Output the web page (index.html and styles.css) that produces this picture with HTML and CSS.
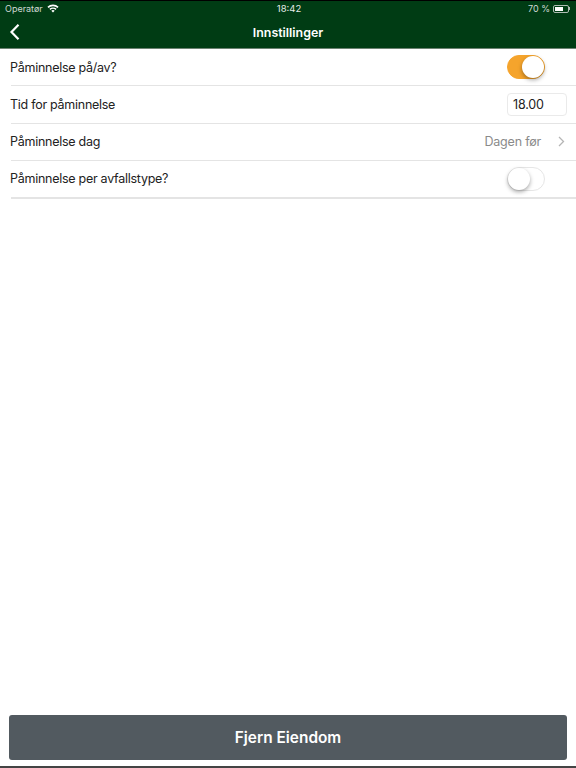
FILE: index.html
```html
<!DOCTYPE html>
<html lang="no">

<head>
  <meta charset="UTF-8">
  <meta name="viewport" content="width=device-width, initial-scale=1.0">
  <title>Innstillinger</title>
  <link rel="stylesheet" href="styles.css">
</head>

<body>
  <header class="top">
    <div class="status">
      <div class="status-left">
        <span>Operatør</span>
        <svg class="wifi" width="12" height="9" viewBox="0 0 12 9">
          <path d="M6 8.6 4.3 6.8a2.5 2.5 0 0 1 3.4 0z" fill="#fff" />
          <path d="M3.4 5.9 2.4 4.8a5.3 5.3 0 0 1 7.2 0l-1 1.1a3.9 3.9 0 0 0-5.2 0z" fill="#fff" />
          <path d="M1.5 3.9.4 2.8a8.2 8.2 0 0 1 11.2 0l-1.1 1.1a6.7 6.7 0 0 0-9 0z" fill="#fff" />
        </svg>
      </div>
      <span class="clock">18:42</span>
      <div class="status-right">
        <span>70 %</span>
        <span class="battery"><span class="battery-level"></span></span>
        <span class="battery-tip"></span>
      </div>
    </div>
    <nav class="nav">
      <svg class="back" width="12" height="16" viewBox="0 0 12 16">
        <path d="M9.5.8 2.5 8l7 7.2" fill="none" stroke="#fff" stroke-width="2.2" />
      </svg>
      <h1 class="title">Innstillinger</h1>
    </nav>
  </header>

  <main class="list">
    <div class="row">
      <span class="label">Påminnelse på/av?</span>
      <span class="switch on"><span class="knob"></span></span>
    </div>
    <div class="row">
      <span class="label">Tid for påminnelse</span>
      <span class="time">18.00</span>
    </div>
    <div class="row">
      <span class="label">Påminnelse dag</span>
      <div class="value">
        <span>Dagen før</span>
        <svg width="7" height="11" viewBox="0 0 7 11">
          <path d="M1 1l4.5 4.5L1 10" fill="none" stroke="#b5b5b5" stroke-width="1.3" />
        </svg>
      </div>
    </div>
    <div class="row last">
      <span class="label">Påminnelse per avfallstype?</span>
      <span class="switch"><span class="knob"></span></span>
    </div>
  </main>

  <footer class="bottom">
    <button class="remove">Fjern Eiendom</button>
  </footer>
</body>

</html>
```

FILE: styles.css
```css
* {
  box-sizing: border-box;
}

html {
  background-color: #fff;
}

body {
  font-family: Inter, 'Liberation Sans', sans-serif;
  color: #222;
  margin: 0;
  display: flex;
  flex-direction: column;
  height: 768px;
  overflow: hidden;
}

.top {
  background-color: #003c14;
  border-top: 1px solid #000;
  border-bottom: 1px solid #6c8272;
  color: #fff;
  height: 49px;
}

.status {
  display: grid;
  grid-template-columns: 1fr auto 1fr;
  align-items: center;
  height: 15px;
  padding: 0 5px;
  font-size: 9px;
  color: #cfd8d2;
}

.status-left {
  display: flex;
  align-items: center;
  gap: 4px;
}

.clock {
  color: #e6ebe7;
  font-size: 9.5px;
  padding-left: 2px;
}

.status-right {
  display: flex;
  align-items: center;
  justify-content: flex-end;
  gap: 3px;
  padding-right: 1px;
}

.battery {
  width: 16px;
  height: 8px;
  border: 1px solid #aebcb3;
  border-radius: 2px;
  padding: 1px;
  display: block;
}

.battery-level {
  display: block;
  width: 70%;
  height: 100%;
  background-color: #fff;
}

.battery-tip {
  width: 1px;
  height: 3px;
  margin-left: -3px;
  background-color: #aebcb3;
}

.nav {
  position: relative;
  display: flex;
  justify-content: center;
  align-items: center;
  height: 32px;
}

.back {
  position: absolute;
  left: 9px;
  top: 8px;
}

.title {
  margin: 0;
  font-size: 12.4px;
  font-weight: 600;
}

.list {
  flex: 1;
}

.row {
  display: flex;
  justify-content: space-between;
  align-items: center;
  height: 37.3px;
  margin-left: 11px;
  padding-right: 9px;
  border-bottom: 1px solid #e4e4e4;
}

.row.last {
  height: 38px;
  border-bottom: 2px solid #e4e4e4;
}

.label {
  margin-left: -1px;
  font-size: 12.5px;
  letter-spacing: -0.27px;
}

.switch {
  display: block;
  position: relative;
  width: 38px;
  height: 24px;
  margin-right: 22px;
  border: 1px solid #e6e6e6;
  border-radius: 12px;
  background-color: #fff;
}

.switch.on {
  background-color: #f5a42c;
  border-color: #f5a42c;
}

.knob {
  position: absolute;
  left: 0;
  top: 0;
  width: 22px;
  height: 22px;
  border-radius: 50%;
  background-color: #fff;
  box-shadow: 0 2px 4px rgba(0, 0, 0, 0.35);
}

.switch.on .knob {
  left: 14px;
}

.time {
  width: 60px;
  height: 23px;
  padding-left: 5px;
  border: 1px solid #eaeaea;
  border-radius: 4px;
  font-size: 12.5px;
  line-height: 21px;
  letter-spacing: -0.2px;
}

.value {
  display: flex;
  align-items: center;
  gap: 17px;
  padding-right: 2px;
  font-size: 12.5px;
  letter-spacing: -0.2px;
  color: #8a8a8a;
}

.bottom {
  padding: 0 9px 6px;
  border-bottom: 2px solid #444;
}

.remove {
  display: block;
  width: 100%;
  height: 45px;
  border: 0;
  border-radius: 3px;
  background-color: #525a60;
  color: #fff;
  font-family: inherit;
  font-size: 15.4px;
  font-weight: 600;
}
```
